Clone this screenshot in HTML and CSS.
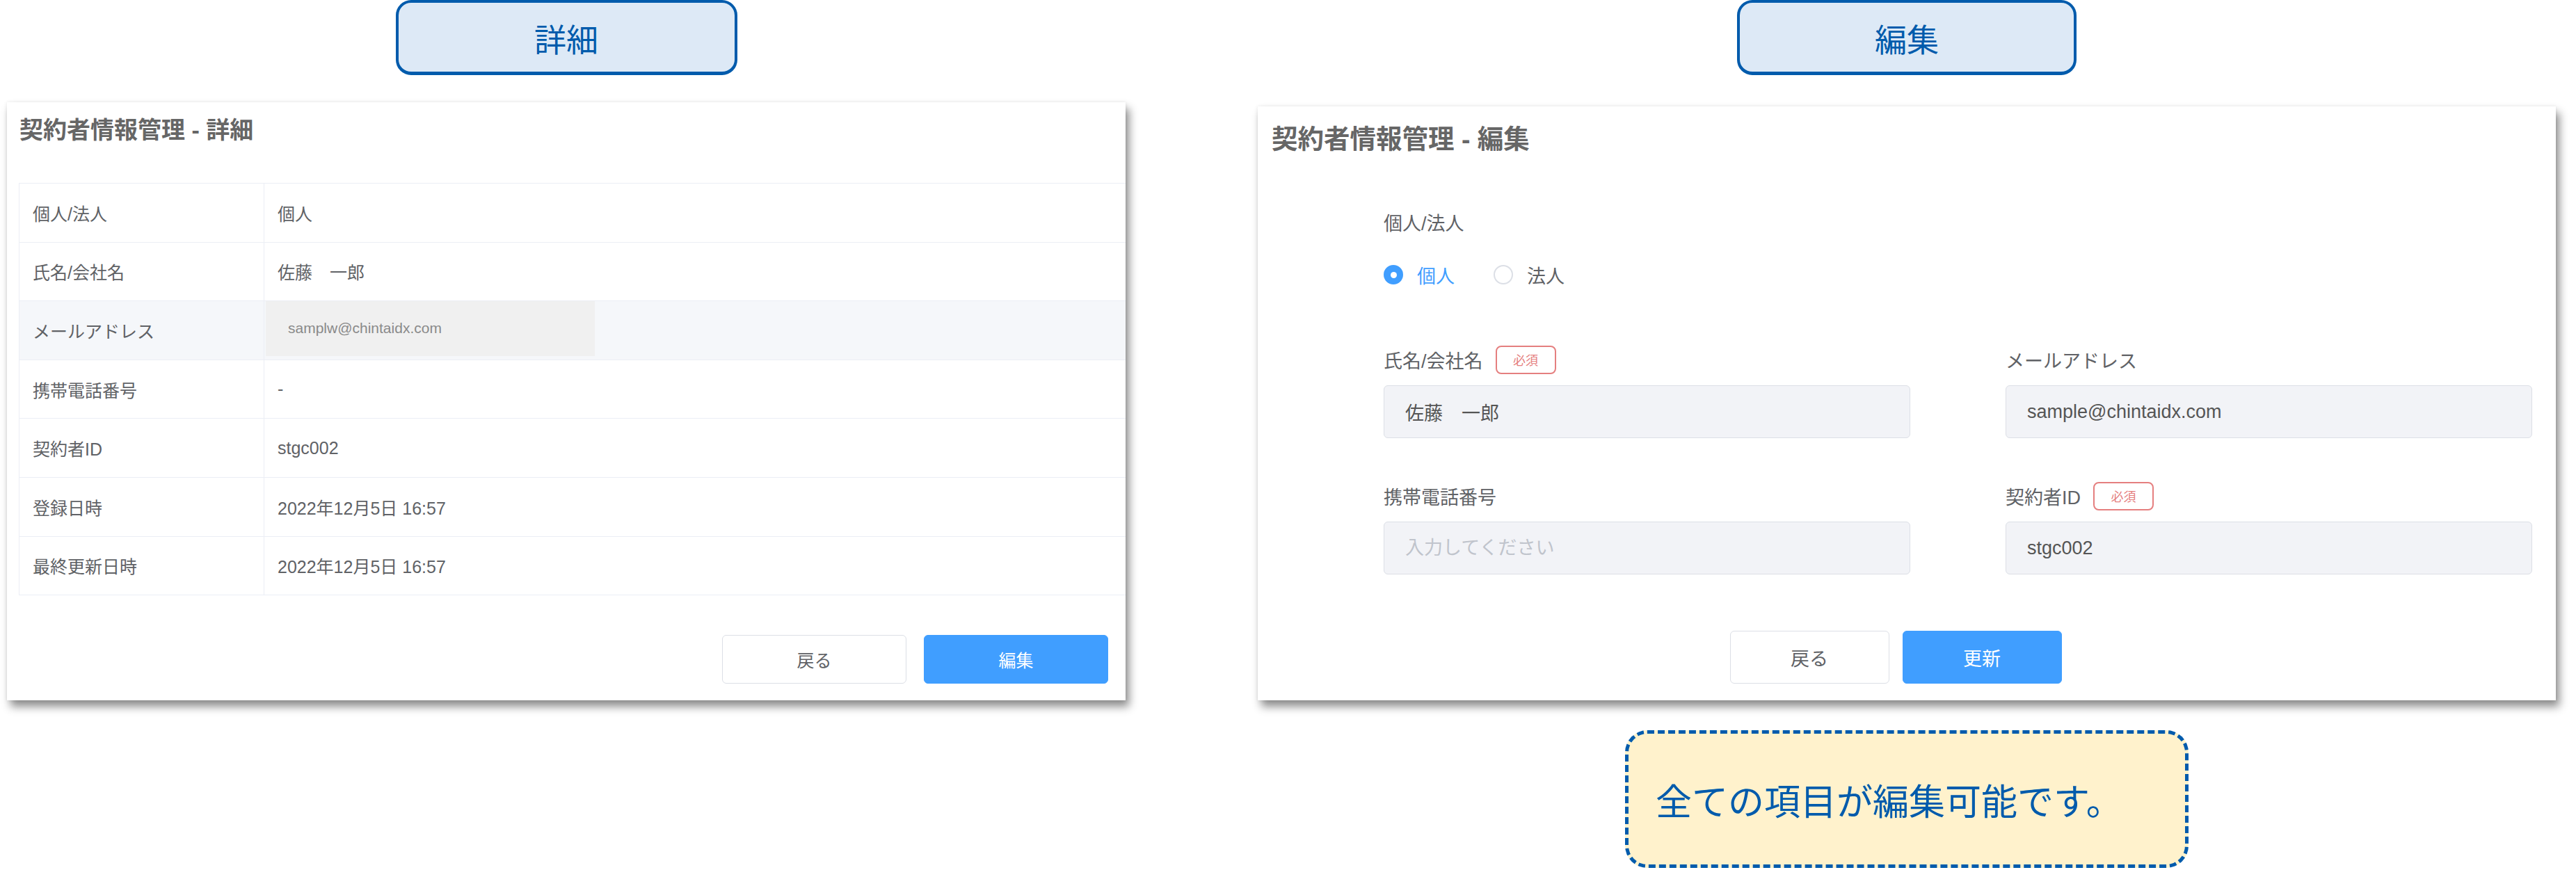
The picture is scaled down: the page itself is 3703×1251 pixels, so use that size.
FILE: index.html
```html
<!DOCTYPE html>
<html lang="ja">
<head>
    <meta charset="UTF-8">
    <meta name="viewport" content="width=device-width, initial-scale=1.0">
    <title>契約者情報管理</title>
    <link rel="stylesheet" href="styles.css">
</head>
<body>
    <div class="page">
        <!-- 詳細画面 -->
        <section class="column column-detail">
            <div class="tab">詳細</div>
            <div class="card detail-card">
                <h2 class="card-title">契約者情報管理 - 詳細</h2>
                <div class="info-table">
                    <div class="info-row">
                        <div class="info-label">個人/法人</div>
                        <div class="info-value">個人</div>
                    </div>
                    <div class="info-row">
                        <div class="info-label">氏名/会社名</div>
                        <div class="info-value">佐藤　一郎</div>
                    </div>
                    <div class="info-row is-hover">
                        <div class="info-label">メールアドレス</div>
                        <div class="info-value"><span class="value-chip">samplw@chintaidx.com</span></div>
                    </div>
                    <div class="info-row">
                        <div class="info-label">携帯電話番号</div>
                        <div class="info-value">-</div>
                    </div>
                    <div class="info-row">
                        <div class="info-label">契約者ID</div>
                        <div class="info-value">stgc002</div>
                    </div>
                    <div class="info-row">
                        <div class="info-label">登録日時</div>
                        <div class="info-value">2022年12月5日 16:57</div>
                    </div>
                    <div class="info-row">
                        <div class="info-label">最終更新日時</div>
                        <div class="info-value">2022年12月5日 16:57</div>
                    </div>
                </div>
                <div class="actions actions-end">
                    <button type="button" class="btn">戻る</button>
                    <button type="button" class="btn btn-primary">編集</button>
                </div>
            </div>
        </section>

        <!-- 編集画面 -->
        <section class="column column-edit">
            <div class="tab tab-edit">編集</div>
            <div class="card edit-card">
                <h2 class="card-title">契約者情報管理 - 編集</h2>
                <form class="edit-form">
                    <div class="field-type">
                        <div class="field-label">個人/法人</div>
                        <div class="radio-group">
                            <label class="radio is-checked"><span class="radio-dot"></span>個人</label>
                            <label class="radio"><span class="radio-dot"></span>法人</label>
                        </div>
                    </div>
                    <div class="field-grid">
                        <div class="field">
                            <div class="field-label">氏名/会社名<span class="required">必須</span></div>
                            <input class="text-input" type="text" value="佐藤　一郎">
                        </div>
                        <div class="field">
                            <div class="field-label">メールアドレス</div>
                            <input class="text-input" type="email" value="sample@chintaidx.com">
                        </div>
                        <div class="field">
                            <div class="field-label">携帯電話番号</div>
                            <input class="text-input" type="text" placeholder="入力してください">
                        </div>
                        <div class="field">
                            <div class="field-label">契約者ID<span class="required">必須</span></div>
                            <input class="text-input" type="text" value="stgc002">
                        </div>
                    </div>
                </form>
                <div class="actions actions-center">
                    <button type="button" class="btn btn-lg">戻る</button>
                    <button type="button" class="btn btn-lg btn-primary">更新</button>
                </div>
            </div>
            <div class="note">全ての項目が編集可能です。</div>
        </section>
    </div>
</body>
</html>
```

FILE: styles.css
```css
body {
    margin: 0;
    font-family: "Liberation Sans", "Noto Sans CJK JP", sans-serif;
    background: #fff;
    color: #606266;
}

.page {
    display: flex;
    align-items: flex-start;
    gap: 190px;
    padding-left: 10px;
}

.column {
    display: flex;
    flex-direction: column;
    align-items: center;
}

.column-detail {
    width: 1608px;
}

.column-edit {
    width: 1866px;
}

.tab {
    width: 491px;
    height: 108px;
    box-sizing: border-box;
    border: 4px solid #005bac;
    border-bottom-width: 5px;
    border-radius: 22px;
    background: #dde9f6;
    color: #005bac;
    font-family: "Noto Sans CJK JP", sans-serif;
    font-size: 46px;
    display: flex;
    align-items: center;
    justify-content: center;
}

.tab-edit {
    width: 488px;
}

.card {
    align-self: stretch;
    background: #fff;
    overflow: hidden;
    box-shadow: 5px 9px 12px rgba(0, 0, 0, 0.45), 0 0 5px rgba(0, 0, 0, 0.08);
}

.card-title {
    margin: 0;
    font-size: 34px;
    line-height: 40px;
    font-weight: bold;
    color: #666;
}

/* detail */
.detail-card {
    margin-top: 39px;
    padding: 20px 0 24px 17px;
}

.detail-card .card-title {
    padding-left: 1px;
}

.info-table {
    margin-top: 56px;
    border-top: 1px solid #ebeef5;
    border-left: 1px solid #ebeef5;
}

.info-row {
    display: flex;
    height: 84.6px;
    box-sizing: border-box;
    border-bottom: 1px solid #ebeef5;
    font-size: 25px;
}

.info-row.is-hover {
    background: #f5f7fa;
}

.info-label {
    width: 352px;
    box-sizing: border-box;
    padding-left: 19px;
    border-right: 1px solid #ebeef5;
    display: flex;
    align-items: center;
}

.info-value {
    flex: 1;
    padding-left: 19px;
    display: flex;
    align-items: center;
}

.value-chip {
    align-self: stretch;
    width: 473px;
    box-sizing: border-box;
    margin: 0 0 5px -17px;
    padding-left: 32px;
    background: #f0f0f0;
    color: #8a8a8a;
    font-size: 21px;
    display: flex;
    align-items: center;
}

/* buttons */
.actions {
    display: flex;
    gap: 25px;
    margin-top: 57px;
}

.actions-end {
    justify-content: flex-end;
    padding-right: 25px;
}

.actions-center {
    justify-content: center;
    gap: 19px;
    margin-top: 81px;
    padding-right: 18px;
}

.btn {
    width: 265px;
    height: 70px;
    border: 1px solid #dcdfe6;
    border-radius: 6px;
    background: #fff;
    color: #606266;
    font-family: inherit;
    font-size: 25px;
    cursor: pointer;
}

.btn-lg {
    width: 229px;
    height: 76px;
    font-size: 27px;
}

.btn-primary {
    background: #409eff;
    border-color: #409eff;
    color: #fff;
}

/* edit */
.edit-card {
    margin-top: 45px;
    padding: 27px 34px 24px 20px;
}

.edit-card .card-title {
    font-size: 37.5px;
}

.edit-form {
    padding-left: 161px;
    font-size: 27px;
}

.field-type {
    margin-top: 81px;
}

.field-type .field-label {
    height: 36px;
}

.field-label {
    display: flex;
    align-items: center;
    gap: 18px;
    height: 42px;
}

.radio-group {
    display: flex;
    align-items: center;
    height: 36px;
    margin-top: 40px;
}

.radio {
    display: inline-flex;
    align-items: center;
    gap: 20px;
    margin-right: 56px;
}

.radio-dot {
    width: 28px;
    height: 28px;
    box-sizing: border-box;
    border: 2px solid #dcdfe6;
    border-radius: 50%;
    display: flex;
    align-items: center;
    justify-content: center;
}

.radio.is-checked {
    color: #409eff;
}

.radio.is-checked .radio-dot {
    background: #409eff;
    border-color: #409eff;
}

.radio.is-checked .radio-dot::after {
    content: "";
    width: 9px;
    height: 9px;
    border-radius: 50%;
    background: #fff;
}

.field-grid {
    display: grid;
    grid-template-columns: 757px 757px;
    column-gap: 137px;
    row-gap: 62px;
    margin-top: 83px;
}

.required {
    width: 87px;
    height: 41px;
    box-sizing: border-box;
    border: 2px solid #e57f7f;
    border-radius: 8px;
    color: #e57f7f;
    font-size: 18px;
    display: flex;
    align-items: center;
    justify-content: center;
}

.text-input {
    display: block;
    width: 100%;
    height: 76px;
    box-sizing: border-box;
    margin-top: 16px;
    padding: 0 30px;
    background: #f2f3f7;
    border: 1px solid #dcdfe6;
    border-radius: 6px;
    color: #555;
    font-family: inherit;
    font-size: 27px;
}

.text-input::placeholder {
    color: #c0c4cc;
}

.note {
    width: 810px;
    height: 198px;
    box-sizing: border-box;
    margin-top: 43px;
    padding-left: 39px;
    border: 5px dashed #005bac;
    border-radius: 32px;
    background: #fff2cc;
    color: #005bac;
    font-family: "Noto Sans CJK JP", sans-serif;
    font-size: 52px;
    display: flex;
    align-items: center;
}
```
